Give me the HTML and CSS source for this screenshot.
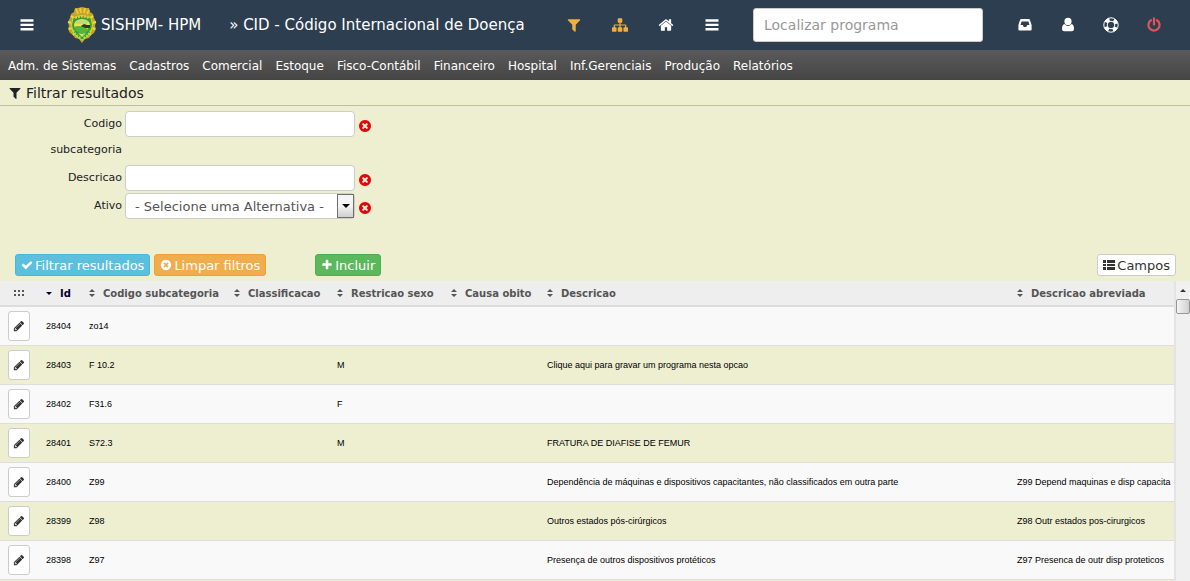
FILE: index.html
```html
<!DOCTYPE html>
<html lang="pt-br">
<head>
    <meta charset="utf-8">
    <title>CID - Código Internacional de Doença</title>
    <link rel="stylesheet" href="styles.css">
</head>
<body>
    <!-- icons -->
    <svg class="sprite">
        <symbol id="bars" viewBox="0 0 16 16"><path d="M1.500 2.300h13v2.400h-13zM1.500 6.700h13v2.400h-13zM1.500 11.100h13v2.400h-13z"/></symbol>
        <symbol id="filter" viewBox="0 0 1792 1792"><path d="M1595 295q17 41-14 70l-493 493v742q0 42-39 59-13 5-25 5-27 0-45-19l-256-256q-19-19-19-45v-486l-493-493q-31-29-14-70 17-39 59-39h1280q42 0 59 39z"/></symbol>
        <symbol id="sitemap" viewBox="0 0 1792 1792"><path d="M1792 1248v320q0 40-28 68t-68 28h-320q-40 0-68-28t-28-68v-320q0-40 28-68t68-28h96v-192h-512v192h96q40 0 68 28t28 68v320q0 40-28 68t-68 28h-320q-40 0-68-28t-28-68v-320q0-40 28-68t68-28h96v-192h-512v192h96q40 0 68 28t28 68v320q0 40-28 68t-68 28h-320q-40 0-68-28t-28-68v-320q0-40 28-68t68-28h96v-192q0-52 38-90t90-38h512v-192h-96q-40 0-68-28t-28-68v-320q0-40 28-68t68-28h320q40 0 68 28t28 68v320q0 40-28 68t-68 28h-96v192h512q52 0 90 38t38 90v192h96q40 0 68 28t28 68z"/></symbol>
        <symbol id="home" viewBox="0 0 1792 1792"><path d="M1472 992v480q0 26-19 45t-45 19h-384v-384h-256v384h-384q-26 0-45-19t-19-45v-480q0-1 .5-3t.5-3l575-474 575 474q1 2 1 6zm223-69l-62 74q-8 9-21 11h-3q-13 0-21-7l-692-577-692 577q-12 8-24 7-13-2-21-11l-62-74q-8-10-7-23.5t11-21.5l719-599q32-26 76-26t76 26l244 204v-195q0-14 9-23t23-9h192q14 0 23 9t9 23v408l219 182q10 8 11 21.5t-7 23.5z"/></symbol>
        <symbol id="inbox" viewBox="0 0 16 16"><path fill-rule="evenodd" d="M4.200 2h7.600q.8 0 1.100.8L14.600 8V12.500q0 1-1 1H2.400q-1 0-1-1V8L3.100 2.800Q3.400 2 4.200 2zM4.600 4.500L3.500 8H5.800L6.800 10H9.200L10.200 8H12.500L11.400 4.500z"/></symbol>
        <symbol id="user" viewBox="0 0 16 16"><circle cx="8" cy="4.400" r="3.600"/><path d="M4.500 7Q6 9 8 9T11.500 7Q14 7.800 14 11.800Q14 14.300 11.800 14.300H4.200Q2 14.300 2 11.800Q2 7.800 4.500 7z"/></symbol>
        <symbol id="ring" viewBox="0 0 16 16"><circle cx="8" cy="8" r="7.200" fill="none" stroke="currentColor"/><circle cx="8" cy="8" r="3.800" fill="none" stroke="currentColor"/><circle cx="8" cy="8" r="5.500" fill="none" stroke="currentColor" stroke-width="3.400" stroke-dasharray="4.320" stroke-dashoffset="-2.160"/></symbol>
        <symbol id="power" viewBox="0 0 16 16"><path d="M5 3.200A5.600 5.600 0 1 0 11 3.200M8 1.400V7.600" fill="none" stroke="currentColor" stroke-width="2.200" stroke-linecap="round"/></symbol>
        <symbol id="times" viewBox="0 0 1792 1792"><path d="M1277 1122q0-26-19-45l-181-181 181-181q19-19 19-45 0-27-19-46l-90-90q-19-18-46-18-26 0-45 18l-181 181-181-181q-19-18-45-18-27 0-46 18l-90 90q-19 19-19 46 0 26 19 45l181 181-181 181q-19 19-19 45 0 27 19 46l90 90q19 18 46 18 26 0 45-18l181-181 181 181q19 18 45 18 27 0 46-18l90-90q19-19 19-46zm387-226q0 209-103 385.5t-279.500 279.500-385.500 103-385.500-103-279.500-279.500-103-385.500 103-385.500 279.500-279.500 385.500-103 385.500 103 279.500 279.500 103 385.500z"/></symbol>
        <symbol id="check" viewBox="0 0 1792 1792"><path d="M1671 566q0 40-28 68l-724 724-136 136q-28 28-68 28t-68-28l-136-136-362-362q-28-28-28-68t28-68l136-136q28-28 68-28t68 28l294 295 656-657q28-28 68-28t68 28l136 136q28 28 28 68z"/></symbol>
        <symbol id="plus" viewBox="0 0 1792 1792"><path d="M1600 736v192q0 40-28 68t-68 28h-416v416q0 40-28 68t-68 28h-192q-40 0-68-28t-28-68v-416h-416q-40 0-68-28t-28-68v-192q0-40 28-68t68-28h416v-416q0-40 28-68t68-28h192q40 0 68 28t28 68v416h416q40 0 68 28t28 68z"/></symbol>
        <symbol id="pencil" viewBox="0 0 1792 1792"><path d="M491 1536l91-91-235-235-91 91v107h128v128h107zm523-928q0-22-22-22-10 0-17 7l-542 542q-7 7-7 17 0 22 22 22 10 0 17-7l542-542q7-7 7-17zm-54-192l416 416-832 832h-416v-416zm683 96q0 53-37 90l-166 166-416-416 166-165q36-38 90-38 53 0 91 38l235 234q37 39 37 91z"/></symbol>
        <symbol id="list" viewBox="0 0 12 12"><path d="M0 1h3v3H0zM4 1h8v3H4zM0 5h3v2H0zM4 5h8v2H4zM0 8h3v3H0zM4 8h8v3H4z"/></symbol>
        <symbol id="sort" viewBox="0 0 6 8"><path d="M3 0L6 3H0zM0 5h6L3 8z"/></symbol>
        <symbol id="down" viewBox="0 0 6 8"><path d="M0 3h6L3 6z"/></symbol>
        <symbol id="grip" viewBox="0 0 11 6"><path d="M0 0h2v2H0zM4 0h2v2H4zM8 0h2v2H8zM0 4h2v2H0zM4 4h2v2H4zM8 4h2v2H8z"/></symbol>
    </svg>

    <header class="topbar">
        <a href="#" aria-label="Menu"><svg class="icon"><use href="#bars"/></svg></a>
        <svg class="brasao" viewBox="0 0 30 36">
            <path d="M15 0l4 1 3 0 1 4 3 2 1 4 2 4-1 4 1 3-2 4-3 2-2 3-4 1-3 4-3-4-4-1-2-3-3-2-2-4 1-3-1-4 2-4 1-4 3-2 1-4 3 0z" fill="#c3a52a"/>
            <path d="M9 2l2 5M13 1l1 5M18 1l-1 5M22 3l-2 4" stroke="#ecc93a" stroke-width="2"/>
            <path d="M4 9l3 2M26 9l-3 2M1 15l4 1M29 15l-4 1M2 22l3-1M28 22l-3-1M6 28l2-2M24 28l-2-2" stroke="#e6dc4c" stroke-width="2"/>
            <path d="M6 11Q15 6 24 11Q27 18 24 25Q20 31 15 33Q10 31 6 25Q3 18 6 11z" fill="#3f9b35" stroke="#cdd83f"/>
            <path d="M8 11Q15 8 22 11" fill="none" stroke="#d6cf43" stroke-width="2" stroke-dasharray="2 1"/>
            <ellipse cx="15" cy="18" rx="8" ry="6" fill="#f0e34a"/>
            <path d="M8 15q7-5 14 0l-3 2H9z" fill="#b5df7c"/>
            <path d="M14 19l3-2 3 1h3v3h-9z" fill="#263c31"/>
            <path d="M7 20q6-3 15 3l-5 4q-8-1-10-7z" fill="#55b63b"/>
            <path d="M6 23q3 6 8 8M24 23q-3 6-8 8" fill="none" stroke="#a9df49" stroke-width="2" stroke-dasharray="2 1"/>
            <path d="M11 26l4 1 4-1-4 4z" fill="#c9e468"/>
        </svg>
        <span class="brand">SISHPM- HPM</span>
        <h1 class="program">» CID - Código Internacional de Doença</h1>
        <nav class="shortcuts">
            <a href="#" class="gold" aria-label="Filtro"><svg class="icon"><use href="#filter"/></svg></a>
            <a href="#" class="gold" aria-label="Mapa"><svg class="icon"><use href="#sitemap"/></svg></a>
            <a href="#" aria-label="Início"><svg class="icon"><use href="#home"/></svg></a>
            <a href="#" aria-label="Lista"><svg class="icon"><use href="#bars"/></svg></a>
        </nav>
        <input type="text" class="search" placeholder="Localizar programa" aria-label="Localizar programa">
        <nav class="account">
            <a href="#" aria-label="Mensagens"><svg class="icon"><use href="#inbox"/></svg></a>
            <a href="#" aria-label="Usuário"><svg class="icon"><use href="#user"/></svg></a>
            <a href="#" aria-label="Ajuda"><svg class="icon"><use href="#ring"/></svg></a>
            <a href="#" class="red" aria-label="Sair"><svg class="icon"><use href="#power"/></svg></a>
        </nav>
    </header>

    <nav class="menu">
        <a href="#">Adm. de Sistemas</a>
        <a href="#">Cadastros</a>
        <a href="#">Comercial</a>
        <a href="#">Estoque</a>
        <a href="#">Fisco-Contábil</a>
        <a href="#">Financeiro</a>
        <a href="#">Hospital</a>
        <a href="#">Inf.Gerenciais</a>
        <a href="#">Produção</a>
        <a href="#">Relatórios</a>
    </nav>

    <h2 class="filter-title"><svg class="icon-title"><use href="#filter"/></svg>Filtrar resultados</h2>

    <form>
        <div class="fields">
            <div class="field">
                <label for="codigo">Codigo subcategoria</label>
                <input type="text" id="codigo">
                <button type="button" class="clear" aria-label="Limpar"><svg><use href="#times"/></svg></button>
            </div>
            <div class="field">
                <label for="descricao">Descricao</label>
                <input type="text" id="descricao">
                <button type="button" class="clear" aria-label="Limpar"><svg><use href="#times"/></svg></button>
            </div>
            <div class="field">
                <label for="ativo">Ativo</label>
                <div class="select-box">
                    <select id="ativo">
                        <option>- Selecione uma Alternativa -</option>
                        <option>Sim</option>
                        <option>Não</option>
                    </select>
                    <span class="select-arrow"></span>
                </div>
                <button type="button" class="clear" aria-label="Limpar"><svg><use href="#times"/></svg></button>
            </div>
        </div>
        <div class="actions">
            <button type="button" class="btn btn-info"><svg class="icon-sm"><use href="#check"/></svg>Filtrar resultados</button>
            <button type="button" class="btn btn-warning"><svg class="icon-sm"><use href="#times"/></svg>Limpar filtros</button>
            <button type="button" class="btn btn-success"><svg class="icon-sm"><use href="#plus"/></svg>Incluir</button>
            <button type="button" class="btn btn-default"><svg class="icon-sm"><use href="#list"/></svg>Campos</button>
        </div>
    </form>

    <div class="results">
        <div class="grid">
            <table>
                <colgroup>
                    <col class="c-edit"><col class="c-id"><col class="c-codigo"><col class="c-class">
                    <col class="c-sexo"><col class="c-obito"><col><col class="c-abrev">
                </colgroup>
                <thead>
                    <tr>
                        <th><svg class="grip"><use href="#grip"/></svg></th>
                        <th class="active"><svg class="sort"><use href="#down"/></svg>Id</th>
                        <th><svg class="sort"><use href="#sort"/></svg>Codigo subcategoria</th>
                        <th><svg class="sort"><use href="#sort"/></svg>Classificacao</th>
                        <th><svg class="sort"><use href="#sort"/></svg>Restricao sexo</th>
                        <th><svg class="sort"><use href="#sort"/></svg>Causa obito</th>
                        <th><svg class="sort"><use href="#sort"/></svg>Descricao</th>
                        <th><svg class="sort"><use href="#sort"/></svg>Descricao abreviada</th>
                    </tr>
                </thead>
                <tbody>
                    <tr>
                        <td><button type="button" class="edit" aria-label="Editar"><svg><use href="#pencil"/></svg></button></td>
                        <td>28404</td><td>zo14</td><td></td><td></td><td></td><td></td><td></td>
                    </tr>
                    <tr>
                        <td><button type="button" class="edit" aria-label="Editar"><svg><use href="#pencil"/></svg></button></td>
                        <td>28403</td><td>F 10.2</td><td></td><td>M</td><td></td><td>Clique aqui para gravar um programa nesta opcao</td><td></td>
                    </tr>
                    <tr>
                        <td><button type="button" class="edit" aria-label="Editar"><svg><use href="#pencil"/></svg></button></td>
                        <td>28402</td><td>F31.6</td><td></td><td>F</td><td></td><td></td><td></td>
                    </tr>
                    <tr>
                        <td><button type="button" class="edit" aria-label="Editar"><svg><use href="#pencil"/></svg></button></td>
                        <td>28401</td><td>S72.3</td><td></td><td>M</td><td></td><td>FRATURA DE DIAFISE DE FEMUR</td><td></td>
                    </tr>
                    <tr>
                        <td><button type="button" class="edit" aria-label="Editar"><svg><use href="#pencil"/></svg></button></td>
                        <td>28400</td><td>Z99</td><td></td><td></td><td></td><td>Dependência de máquinas e dispositivos capacitantes, não classificados em outra parte</td><td>Z99 Depend maquinas e disp capacita</td>
                    </tr>
                    <tr>
                        <td><button type="button" class="edit" aria-label="Editar"><svg><use href="#pencil"/></svg></button></td>
                        <td>28399</td><td>Z98</td><td></td><td></td><td></td><td>Outros estados pós-cirúrgicos</td><td>Z98 Outr estados pos-cirurgicos</td>
                    </tr>
                    <tr>
                        <td><button type="button" class="edit" aria-label="Editar"><svg><use href="#pencil"/></svg></button></td>
                        <td>28398</td><td>Z97</td><td></td><td></td><td></td><td>Presença de outros dispositivos protéticos</td><td>Z97 Presenca de outr disp proteticos</td>
                    </tr>
                </tbody>
            </table>
        </div>
        <div class="scrollbar">
            <span class="scroll-up"></span>
            <span class="scroll-thumb"></span>
        </div>
    </div>
</body>
</html>
```

FILE: styles.css
```css
* {
    box-sizing: border-box;
}
body {
    margin: 0;
    height: 100vh;
    display: flex;
    flex-direction: column;
    overflow: hidden;
    background-color: #eeeed1;
    color: #222;
    font-family: Verdana, "DejaVu Sans", sans-serif;
}
a {
    color: inherit;
    text-decoration: none;
}
svg {
    display: block;
    fill: currentColor;
    flex: none;
}
button, input, select {
    font-family: inherit;
}
.sprite {
    position: absolute;
    width: 0;
    height: 0;
}
.icon {
    width: 16px;
    height: 16px;
}
.icon-title {
    width: 14px;
    height: 14px;
}
.icon-sm {
    width: 12px;
    height: 12px;
}

/* top bar */
.topbar {
    height: 50px;
    flex: none;
    display: flex;
    align-items: center;
    padding: 0 28px 0 19px;
    background-color: #2c3e50;
    color: #fff;
    white-space: nowrap;
}
.brasao {
    width: 30px;
    height: 36px;
    margin: 0 4px 0 32px;
}
.brand {
    font-size: 15px;
}
.program {
    margin: 0 auto 0 28px;
    font-size: 15px;
    font-weight: normal;
}
.shortcuts {
    display: flex;
    gap: 30px;
    margin-right: 33px;
}
.account {
    display: flex;
    gap: 27px;
    margin-left: 34px;
}
.gold {
    color: #f0b040;
}
.red {
    color: #e0555a;
}
.search {
    width: 230px;
    height: 34px;
    padding: 0 10px;
    border: 1px solid #ccc;
    border-radius: 3px;
    font-size: 14px;
}
.search::placeholder {
    color: #999;
}

/* menu */
.menu {
    height: 30px;
    flex: none;
    display: flex;
    align-items: center;
    gap: 13px;
    padding: 2px 8px 0;
    background: linear-gradient(#5a5a5a, #454545);
    color: #fff;
    font-size: 12px;
    white-space: nowrap;
}

/* filter form */
.filter-title {
    display: flex;
    align-items: center;
    gap: 4px;
    height: 26px;
    flex: none;
    margin: 0;
    padding: 0 8px;
    border-bottom: 1px solid #bbb;
    font-size: 14px;
    font-weight: normal;
}
.fields {
    display: flex;
    flex-direction: column;
    gap: 2px;
    padding: 5px 15px;
}
.field {
    display: flex;
    align-items: flex-start;
    gap: 3px;
}
.field label {
    width: 107px;
    line-height: 26px;
    font-size: 11px;
    text-align: right;
}
.field input, .select-box {
    width: 230px;
    height: 26px;
}
.field input, .field select {
    padding: 0 9px;
    border: 1px solid #ccc;
    border-radius: 4px;
    background-color: #fff;
    color: #555;
    font-size: 13px;
}
.select-box {
    position: relative;
}
.field select {
    width: 100%;
    height: 100%;
    appearance: none;
}
.select-arrow {
    position: absolute;
    top: 1px;
    right: 1px;
    width: 17px;
    height: 24px;
    display: flex;
    align-items: center;
    justify-content: center;
    border: 1px solid #707070;
    background: linear-gradient(#f4f4f4 50%, #cfcfcf);
    pointer-events: none;
}
.select-arrow::after {
    content: "";
    border: 4px solid transparent;
    border-top-color: #000;
    border-bottom: 0;
}
.clear {
    margin-top: 8px;
    padding: 0;
    border: 0;
    background: none;
    color: #e2050d;
    cursor: pointer;
}
.clear svg {
    width: 14px;
    height: 14px;
}
.actions {
    display: flex;
    gap: 4px;
    padding: 30px 14px 5px 15px;
}
.btn {
    display: flex;
    align-items: center;
    gap: 2px;
    height: 22px;
    padding: 0 5px;
    border: 1px solid;
    border-radius: 3px;
    color: #fff;
    font-size: 13px;
    white-space: nowrap;
    cursor: pointer;
}
.btn-info {
    background-color: #5bc0de;
    border-color: #46b8da;
}
.btn-warning {
    background-color: #f0ad4e;
    border-color: #eea236;
}
.btn-success {
    margin-left: 45px;
    background-color: #5cb85c;
    border-color: #4cae4c;
}
.btn-default {
    margin-left: auto;
    background-color: #fff;
    border-color: #ccc;
    color: #333;
}

/* results */
.results {
    flex: 1;
    min-height: 0;
    display: flex;
}
.grid {
    flex: 1;
    min-width: 0;
    overflow: hidden;
}
table {
    width: 100%;
    table-layout: fixed;
    border-collapse: separate;
    border-spacing: 0;
}
.c-edit { width: 38px; }
.c-id { width: 43px; }
.c-codigo { width: 145px; }
.c-class { width: 103px; }
.c-sexo { width: 114px; }
.c-obito { width: 96px; }
.c-abrev { width: 165px; }
th {
    height: 26px;
    padding: 0 8px;
    border-bottom: 2px solid #ddd;
    background-color: #eee;
    color: #555;
    font-size: 10px;
    text-align: left;
    white-space: nowrap;
}
th.active {
    color: #000033;
}
.sort {
    display: inline-block;
    width: 6px;
    height: 8px;
    margin-right: 8px;
}
.grip {
    width: 11px;
    height: 6px;
    margin-left: 6px;
}
td {
    height: 39px;
    padding: 0 8px;
    border-bottom: 1px solid #ddd;
    color: #000;
    font-family: Arial, "Liberation Sans", sans-serif;
    font-size: 9px;
    white-space: nowrap;
}
tbody tr:nth-child(odd) {
    background-color: #f9f9f9;
}
.edit {
    display: flex;
    align-items: center;
    justify-content: center;
    width: 22px;
    height: 30px;
    padding: 0;
    border: 1px solid #ccc;
    border-radius: 3px;
    background-color: #fff;
    color: #333;
    cursor: pointer;
}
.edit svg {
    width: 12px;
    height: 12px;
}
.scrollbar {
    width: 16px;
    flex: none;
    display: flex;
    flex-direction: column;
    align-items: center;
    border-left: 2px solid #e4e4e4;
    background-color: #f0f0f0;
}
.scroll-up {
    margin: 8px 0 7px;
    border: 3px solid transparent;
    border-top: 0;
    border-bottom-color: #333;
}
.scroll-thumb {
    width: 14px;
    height: 15px;
    border: 1px solid #979797;
    border-radius: 2px;
    background: linear-gradient(to right, #f5f5f5, #cfcfcf);
}
```
